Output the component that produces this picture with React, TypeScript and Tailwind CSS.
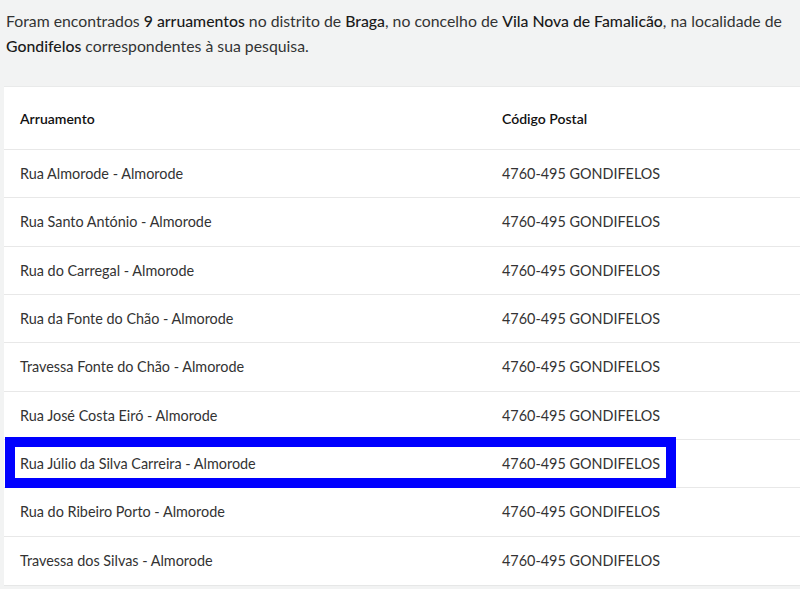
import React from "react";

const rows = [
  "Rua Almorode - Almorode",
  "Rua Santo António - Almorode",
  "Rua do Carregal - Almorode",
  "Rua da Fonte do Chão - Almorode",
  "Travessa Fonte do Chão - Almorode",
  "Rua José Costa Eiró - Almorode",
  "Rua Júlio da Silva Carreira - Almorode",
  "Rua do Ribeiro Porto - Almorode",
  "Travessa dos Silvas - Almorode",
];

export default function App() {
  return (
    <div
      className="w-[800px] h-[589px] bg-[#f2f3f3] overflow-hidden text-[#333333]"
      style={{ fontFamily: "Lato, 'Open Sans', sans-serif" }}
    >
      <p className="pl-[6px] pt-[8px] text-[15.8px] leading-[25px]">
        Foram encontrados <span className="font-medium text-[#1a1a1a]">9 arruamentos</span> no distrito de{" "}
        <span className="font-medium text-[#1a1a1a]">Braga</span>, no concelho de{" "}
        <span className="font-medium text-[#1a1a1a]">Vila Nova de Famalicão</span>, na localidade de{" "}
        <span className="font-medium text-[#1a1a1a]">Gondifelos</span> correspondentes à sua pesquisa.
      </p>
      <div className="relative mt-[28px] ml-[4px] bg-white border-t border-[#e9eaea] shadow-[0_1px_0_#e6e7e7]">
        <div className="flex h-[63px] items-center border-b border-[#e8e8e8] text-[14px] font-semibold text-[#111]">
          <div className="w-[498px] pl-[16px]">Arruamento</div>
          <div>Código Postal</div>
        </div>
        {rows.map((r, i) => (
          <div
            key={r}
            className={
              "flex h-[48.33px] items-center text-[14.4px] " +
              (i < rows.length - 1 ? "border-b border-[#e8e8e8]" : "")
            }
          >
            <div className="w-[498px] pl-[16px]">{r}</div>
            <div>4760-495 GONDIFELOS</div>
          </div>
        ))}
        <div className="absolute left-[1px] top-[350px] w-[671px] h-[51px] border-[10px] border-[#0000ff]" />
      </div>
    </div>
  );
}
